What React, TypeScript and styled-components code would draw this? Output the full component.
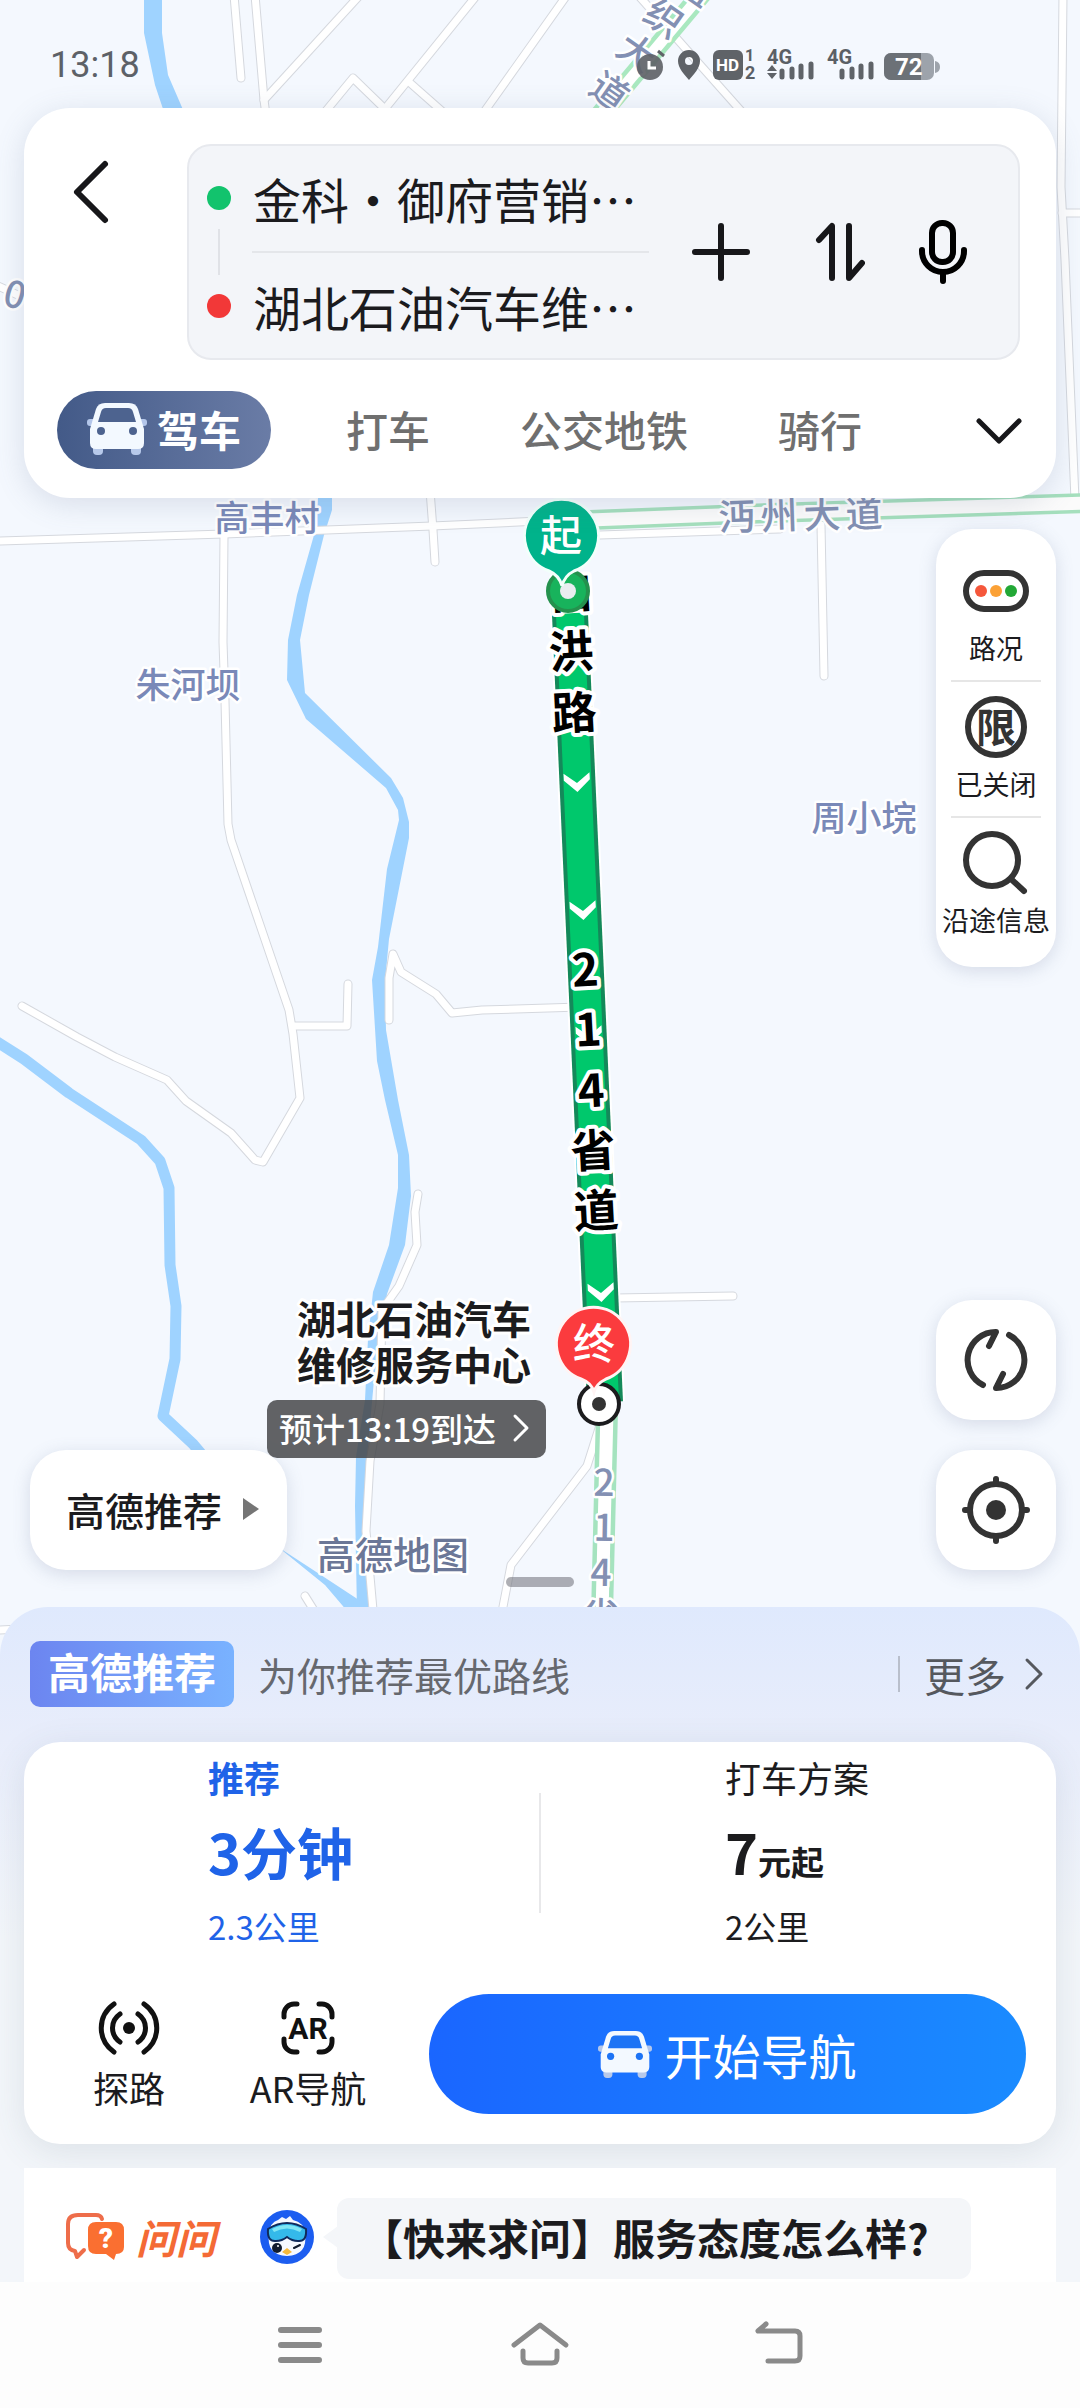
import React from 'react';
import styled, { createGlobalStyle, css } from 'styled-components';

const GlobalStyle = createGlobalStyle`
  *, *::before, *::after { box-sizing: border-box; }
  html, body, #root { min-height: 100vh; }
  body {
    margin: 0;
    background: #fdfdfd;
    color: #1b1b1e;
    font-family: "Noto Sans CJK SC", "Noto Sans", sans-serif;
  }
  #root { display: flex; flex-direction: column; }
  button, input { font: inherit; color: inherit; }
  svg { display: block; flex: none; }
`;

const plainButton = css`
  border: 0;
  margin: 0;
  padding: 0;
  background: none;
  cursor: pointer;
`;

const Screen = styled.main`
  display: flex;
  flex-direction: column;
  flex: 1;
  overflow: hidden;
`;

const MapSection = styled.section`
  position: relative;
  display: flex;
  flex-direction: column;
`;

const MapCanvas = styled.div`
  position: absolute;
  inset: 0 0 -48px;
  background: #f4f8fe;
  svg { width: 100%; height: 100%; }
`;

const StatusBar = styled.header`
  position: relative;
  display: flex;
  align-items: center;
  justify-content: space-between;
  height: 108px;
  padding: 22px 140px 0 50px;
`;

const Clock = styled.time`
  font-family: Roboto, "Noto Sans", sans-serif;
  font-size: 36px;
  line-height: 44px;
  color: #5d6167;
`;

const SearchCard = styled.section`
  position: relative;
  margin: 0 24px;
  padding: 36px 36px 29px 33px;
  border-radius: 46px;
  background: #fff;
  box-shadow: 0 6px 30px rgba(90, 105, 140, 0.18);
`;

const SearchRow = styled.div`
  display: flex;
  align-items: flex-start;
`;

const BackButton = styled.button`
  ${plainButton}
  display: grid;
  place-items: center;
  width: 68px;
  height: 96px;
  margin-right: 62px;
`;

const RouteBox = styled.div`
  flex: 1;
  display: flex;
  align-items: center;
  min-width: 0;
  padding: 0 40px 0 18px;
  border: 2px solid #e7e9ee;
  border-radius: 24px;
  background: #f3f5f9;
`;

const Stops = styled.div`
  flex: 1;
  min-width: 0;
`;

const Stop = styled.label`
  display: flex;
  align-items: center;
  gap: 22px;
  height: 105px;
  padding-bottom: 2px;
  & + div + & { padding-bottom: 0; }
`;

const Dot = styled.span<{ $color: string }>`
  flex: none;
  width: 24px;
  height: 24px;
  border-radius: 50%;
  background: ${(p) => p.$color};
`;

const StopInput = styled.input`
  flex: 1;
  min-width: 0;
  padding: 0;
  border: 0;
  outline: 0;
  background: none;
  font-size: 48px;
  line-height: 64px;
  height: 64px;
`;

const StopDivider = styled.div`
  display: flex;
  align-items: center;
  gap: 32px;
  height: 2px;
  padding-left: 11px;
  &::before {
    content: "";
    width: 2px;
    height: 46px;
    background: #e0e2e7;
  }
  &::after {
    content: "";
    flex: 1;
    height: 2px;
    background: #e4e6ea;
  }
`;

const RouteActions = styled.div`
  display: flex;
  align-items: center;
  gap: 33px;
  margin-left: 37px;
`;

const IconButton = styled.button`
  ${plainButton}
  display: grid;
  place-items: center;
  width: 70px;
  height: 80px;
  &:first-child { margin-right: 16px; }
`;

const Modes = styled.nav`
  display: flex;
  align-items: center;
  margin-top: 31px;
`;

const Mode = styled.button<{ $active?: boolean }>`
  ${plainButton}
  display: flex;
  align-items: center;
  height: 78px;
  padding: 0 45px 2px;
  font-size: 42px;
  line-height: 56px;
  font-weight: 500;
  color: #6f6f6f;
  ${(p) =>
    p.$active &&
    css`
      gap: 10px;
      margin-right: 30px;
      padding: 0 30px 2px;
      border-radius: 39px;
      background: linear-gradient(90deg, #435a88, #6a7ca6);
      color: #fff;
      font-weight: 700;
    `}
`;

const MoreModes = styled.button`
  ${plainButton}
  display: grid;
  place-items: center;
  width: 60px;
  height: 82px;
  margin: 0 -9px -4px auto;
`;

const MapBody = styled.div`
  position: relative;
  display: flex;
  flex-direction: column;
  justify-content: space-between;
  min-height: 1109px;
  padding: 31px 24px 37px 30px;
`;

const ToolPanel = styled.div`
  align-self: flex-end;
  width: 120px;
  padding: 16px 0 14px;
  border-radius: 36px;
  background: #fff;
  box-shadow: 0 4px 18px rgba(90, 105, 140, 0.2);
`;

const Tool = styled.button`
  ${plainButton}
  display: flex;
  flex-direction: column;
  align-items: center;
  gap: 9px;
  width: 120px;
  height: 136px;
  padding-top: 16px;
  font-size: 27px;
  line-height: 36px;
  white-space: nowrap;
  & + &::before {
    content: "";
    width: 90px;
    height: 2px;
    margin: -17px 0 6px;
    flex: none;
    background: #e6e6e6;
  }
`;

const MapControls = styled.div`
  display: flex;
  align-items: flex-end;
  justify-content: space-between;
`;

const RoundButtons = styled.div`
  display: flex;
  flex-direction: column;
  gap: 30px;
`;

const floating = css`
  ${plainButton}
  height: 120px;
  border-radius: 36px;
  background: #fff;
  box-shadow: 0 4px 18px rgba(90, 105, 140, 0.2);
`;

const SquareButton = styled.button`
  ${floating}
  display: grid;
  place-items: center;
  width: 120px;
`;

const PlanButton = styled.button`
  ${floating}
  display: flex;
  align-items: center;
  gap: 20px;
  padding: 0 27px 2px 36px;
  font-size: 39px;
  line-height: 52px;
  font-weight: 500;
`;

const ArrivalTag = styled.button`
  ${plainButton}
  position: absolute;
  top: 902px;
  right: calc(50% - 6px);
  display: flex;
  align-items: center;
  gap: 16px;
  height: 58px;
  padding: 0 16px 2px 12px;
  border-radius: 10px;
  background: rgba(68, 69, 72, 0.84);
  color: #fff;
  font-size: 33px;
  line-height: 44px;
  font-weight: 500;
  white-space: nowrap;
`;

const Handle = styled.span`
  position: absolute;
  bottom: 20px;
  left: 50%;
  width: 68px;
  height: 10px;
  margin-left: -34px;
  border-radius: 5px;
  background: rgba(120, 122, 130, 0.6);
`;

const Sheet = styled.section`
  position: relative;
  padding: 34px 24px 0;
  border-radius: 48px 48px 0 0;
  background: linear-gradient(#dfe9fd 0, #e8edfb 130px, #f3f6fa 330px);
`;

const SheetHeader = styled.header`
  display: flex;
  align-items: center;
  height: 66px;
  padding: 0 12px 0 6px;
`;

const Badge = styled.strong`
  padding: 2px 18px 8px;
  border-radius: 10px;
  background: linear-gradient(90deg, #6c85f0, #79b2ff);
  color: #fff;
  font-size: 42px;
  line-height: 56px;
  font-weight: 700;
`;

const SheetHint = styled.span`
  margin-left: 24px;
  font-size: 39px;
  line-height: 52px;
  color: #66686e;
`;

const MoreLink = styled.a`
  display: flex;
  align-items: center;
  gap: 18px;
  margin-left: auto;
  color: #55585e;
  font-size: 41px;
  line-height: 54px;
  text-decoration: none;
  &::before {
    content: "";
    width: 2px;
    height: 36px;
    margin-right: 6px;
    background: #b9bfcc;
  }
`;

const PlanCard = styled.section`
  margin-top: 35px;
  padding: 9px 30px 30px;
  border-radius: 36px;
  background: #fff;
  box-shadow: 0 8px 36px rgba(60, 80, 100, 0.12);
`;

const Plans = styled.div`
  display: grid;
  grid-template-columns: 1fr 2px 1fr;
  align-items: start;
  height: 213px;
`;

const PlanRule = styled.span`
  height: 120px;
  margin-top: 42px;
  background: #e8e8ea;
`;

const Plan = styled.button<{ $selected?: boolean }>`
  ${plainButton}
  display: flex;
  flex-direction: column;
  gap: 4px;
  padding-left: ${(p) => (p.$selected ? '154px' : '184px')};
  text-align: left;
  color: ${(p) => (p.$selected ? '#1f63e8' : '#1c1c1e')};
`;

const PlanTitle = styled.span<{ $bold?: boolean }>`
  font-size: 36px;
  line-height: 52px;
  font-weight: ${(p) => (p.$bold ? 700 : 400)};
`;

const PlanValue = styled.strong`
  font-size: 56px;
  line-height: 88px;
  font-weight: 700;
  small {
    font-size: 33px;
    line-height: 44px;
  }
`;

const PlanDistance = styled.span`
  font-size: 33px;
  line-height: 54px;
`;

const Actions = styled.div`
  display: flex;
  align-items: center;
  margin-top: 30px;
`;

const SideAction = styled.button`
  ${plainButton}
  display: flex;
  flex-direction: column;
  align-items: center;
  gap: 6px;
  width: 208px;
  margin-right: 17px;
  padding-top: 6px;
  font-size: 36px;
  line-height: 52px;
  &:first-child {
    width: 150px;
    margin-right: 0;
  }
`;

const StartButton = styled.button`
  ${plainButton}
  flex: 1;
  display: flex;
  align-items: center;
  justify-content: center;
  gap: 12px;
  height: 120px;
  border-radius: 60px;
  background: linear-gradient(90deg, #1a66ff, #1a8bff);
  color: #fff;
  font-size: 48px;
  line-height: 64px;
`;

const AskCard = styled.section`
  display: flex;
  align-items: flex-start;
  height: 114px;
  margin-top: 24px;
  padding: 27px 42px 0;
  background: #fff;
`;

const AskBrand = styled.strong`
  display: flex;
  align-items: center;
  gap: 10px;
  height: 84px;
  margin: 0 44px 0 0;
  color: #f46a35;
  font-size: 40px;
  line-height: 52px;
  font-style: italic;
  font-weight: 700;
`;

const AskAvatar = styled.span`
  display: flex;
  align-items: center;
  height: 84px;
`;

const Bubble = styled.a`
  position: relative;
  display: flex;
  align-items: center;
  height: 81px;
  margin: 3px 0 0 23px;
  padding: 0 42px 4px 24px;
  border-radius: 12px;
  background: #f4f6f9;
  color: #1b1b1e;
  font-size: 42px;
  line-height: 56px;
  font-weight: 700;
  text-decoration: none;
  white-space: nowrap;
  &::before {
    content: "";
    position: absolute;
    left: -14px;
    top: 28px;
    border: solid transparent;
    border-width: 11px 15px 11px 0;
    border-right-color: #f4f6f9;
  }
`;

const SystemNav = styled.nav`
  display: flex;
  align-items: center;
  justify-content: center;
  gap: 160px;
  flex: 1;
  min-height: 126px;
  background: #fdfdfd;
`;

const SystemButton = styled.button`
  ${plainButton}
  display: grid;
  place-items: center;
  width: 80px;
  height: 80px;
`;

const ROADS = [
  'M0 541 L224 534 L432 526 L540 521 L620 519',
  'M600 535 L780 529',
  'M224 536 L223 642 L225 701 L228 824 L231 840 L289 1010 L293 1034 L300 1098 L263 1162 L255 1160 L231 1133 L186 1101 L167 1080 L115 1057 L77 1037 L22 1006',
  'M293 1026 L347 1026 L348 984',
  'M389 1020 L389 978 L393 954 L401 972 L436 994 L452 1013 L482 1010 L580 1007',
  'M430 490 L433 530 L435 562',
  'M821 525 L824 676',
  'M418 1194 L415 1212 L417 1245 L399 1286 L382 1310 L380 1404 L370 1461 L366 1531 L373 1610',
  'M615 1298 L733 1296',
  'M600 1425 L587 1466 L511 1565 L502 1612',
  'M305 1596 L315 1612',
  'M0 1630 L40 1628',
  'M234 -5 L241 78',
  'M255 -5 L264 100 L266 115',
  'M360 -5 L264 100',
  'M477 -5 L384 110',
  'M567 -5 L484 112',
  'M325 112 L353 78 L388 112',
  'M409 82 L443 112',
  'M638 -5 L742 112',
  'M1063 -5 L1061 187 L1065 260 L1075 500',
  'M1062 213 L1085 213',
  'M-4 285 L20 296',
];

const RIVER =
  'M144 -2 L162 -2 L162 33 L168 75 L184 112 L332 490 L332 510 L324 535 L309 595 L300 640 L305 693 L391 778 L403 798 L409 822 L409 838 L389 939 L385 982 L386 1030 L398 1100 L409 1155 L411 1196 L405 1245 L387 1294 L374 1380 L367 1457 L364 1539 L369 1612 L357 1612 L355 1506 L356 1457 L365 1400 L368 1339 L373 1292 L389 1245 L398 1188 L398 1155 L385 1100 L377 1061 L372 980 L378 947 L387 869 L399 820 L398 810 L386 788 L306 719 L287 680 L288 640 L297 595 L314 535 L319 490 L164 112 L155 85 L144 33 Z';

type Glyph = [string, number, number, number?];

const ROUTE_GLYPHS: Glyph[] = [
  ['白', 571, 591, -3],
  ['洪', 571, 651, -3],
  ['路', 574, 712, -3],
  ['2', 585, 969, -3],
  ['1', 588, 1029, -3],
  ['4', 591, 1090, -3],
  ['省', 593, 1150, -3],
  ['道', 596, 1210, -3],
];

const ROAD_GLYPHS: Glyph[] = [
  ['组', 696, -14, 35],
  ['织', 664, 18, 35],
  ['大', 637, 52, 35],
  ['道', 610, 91, 35],
  ['沔', 737, 516, -2],
  ['州', 779, 515, -2],
  ['大', 822, 514, -2],
  ['道', 864, 513, -2],
  ['2', 604, 1482, 1],
  ['1', 604, 1527, 1],
  ['4', 601, 1572, 1],
  ['省', 601, 1615, 1],
  ['0', 15, 294, 15],
];

const PLACES: Glyph[] = [
  ['高丰村', 267, 518],
  ['朱河坝', 188, 685],
  ['周小垸', 864, 818],
];

const Label = styled.text<{ $size: number; $color: string; $halo: number; $weight?: number }>`
  font-size: ${(p) => p.$size}px;
  font-weight: ${(p) => p.$weight ?? 500};
  fill: ${(p) => p.$color};
  stroke: #fff;
  stroke-width: ${(p) => p.$halo}px;
  stroke-linejoin: round;
  paint-order: stroke;
  text-anchor: middle;
`;

/* Glyph centre sits roughly 0.37em above the baseline. */
const place = (x: number, y: number, size: number, angle = 0) =>
  `translate(${x} ${y}) rotate(${angle}) translate(0 ${Math.round(size * 0.37)})`;

const MapDrawing = () => (
  <svg viewBox="0 0 1080 1655" preserveAspectRatio="xMidYMin slice" role="img" aria-label="路线地图">
    <g fill="none" strokeLinejoin="round" strokeLinecap="round">
      <path d={RIVER} fill="#9fd3ff" />
      <path
        d="M-6 1040 L24 1059 L69 1093 L141 1140 L160 1161 L169 1188 L170 1265 L176 1306 L175 1359 L163 1416 L193 1444 L240 1500"
        stroke="#9fd3ff"
        strokeWidth="11"
      />
      <path d="M278 1547 L327 1579 L362 1602 L362 1612 L348 1612 L325 1585 Z" fill="#9fd3ff" />
      {ROADS.map((d) => (
        <path key={d} d={d} stroke="#d5d8de" strokeWidth="9" />
      ))}
      {ROADS.map((d) => (
        <path key={d} d={d} stroke="#fff" strokeWidth="7" />
      ))}
      <path d="M590 520 L770 513 L1090 503" stroke="#a5dfbd" strokeWidth="20" />
      <path d="M590 520 L770 513 L1090 503" stroke="#fbfbfb" strokeWidth="13" />
      <path d="M705 -10 L600 115" stroke="#a9e8bf" strokeWidth="20" />
      <path d="M705 -10 L600 115" stroke="#fff" strokeWidth="11" />
      <path d="M607 1410 L602 1615" stroke="#a5e3bf" strokeWidth="22" />
      <path d="M607 1410 L602 1615" stroke="#fff" strokeWidth="13" />
    </g>

    {PLACES.map(([t, x, y]) => (
      <Label key={t} $size={35} $color="#7a89b8" $halo={5} transform={place(x, y, 35)}>{t}</Label>
    ))}
    {ROAD_GLYPHS.map(([t, x, y, a]) => (
      <Label key={`${x}-${y}`} $size={37} $color="#8390b3" $halo={5} transform={place(x, y, 37, a)}>{t}</Label>
    ))}
    <Label $size={38} $color="#6b7797" $halo={5} $weight={500} transform={place(393, 1555, 38)}>高德地图</Label>

    <path d="M569 592 L605 1402" stroke="#fff" strokeWidth="40" />
    <path d="M569 592 L605 1402" stroke="#14895a" strokeWidth="36" />
    <path d="M569 592 L605 1402" stroke="#00c86c" strokeWidth="28" />
    {[[577, 783], [583, 911], [589, 1036], [601, 1293]].map(([x, y]) => (
      <path
        key={y}
        transform={`translate(${x} ${y}) rotate(-3)`}
        d="M-13 -10 L0 0 L13 -10 L13 -3 L0 9 L-13 -3 Z"
        fill="#fff"
      />
    ))}
    {ROUTE_GLYPHS.map(([t, x, y, a]) => (
      <Label key={`${x}-${y}`} $size={45} $color="#000" $halo={8} $weight={700} transform={place(x, y, 45, a)}>{t}</Label>
    ))}

    <circle cx="568" cy="591" r="20" fill="#18b35c" stroke="#24914d" strokeWidth="4" />
    <circle cx="568" cy="591" r="8" fill="#e9edf0" />
    <circle cx="599" cy="1404" r="20" fill="#fff" stroke="#1c1c1e" strokeWidth="4" />
    <circle cx="599" cy="1404" r="7" fill="#333" />

    <path
      d="M562 586 C560 578 556 574 549 571 A37 37 0 1 1 574 571 C568 574 564 578 562 586 Z"
      fill="#00b38b"
      stroke="#f2fffb"
      strokeWidth="3"
    />
    <Label $size={42} $color="#fff" $halo={0} transform={place(561, 535, 42)}>起</Label>
    <path
      d="M594 1392 C592 1385 588 1382 581 1379 A37 37 0 1 1 606 1379 C600 1382 596 1385 594 1392 Z"
      fill="#fb3b3e"
      stroke="#fff4f4"
      strokeWidth="3"
    />
    <Label $size={42} $color="#fff" $halo={0} transform={place(594, 1343, 42)}>终</Label>
    <Label $size={39} $color="#1c1c1e" $halo={6} $weight={700} transform={place(414, 1320, 39)}>湖北石油汽车</Label>
    <Label $size={39} $color="#1c1c1e" $halo={6} $weight={700} transform={place(414, 1366, 39)}>维修服务中心</Label>
  </svg>
);

const StatusText = styled.text<{ $size: number; $color?: string }>`
  font-family: Roboto, "Noto Sans", sans-serif;
  font-size: ${(p) => p.$size}px;
  font-weight: 700;
  fill: ${(p) => p.$color ?? '#5b6066'};
`;

const StatusIcons = () => (
  <svg width="304" height="32" viewBox="0 0 304 32" fill="#5f6368" role="img" aria-label="闹钟 定位 信号 电量72">
    <circle cx="14" cy="18" r="13" opacity="0.92" />
    <path d="M13 12 V19 H20" fill="none" stroke="#fff" strokeWidth="3" />
    <path d="M22 2 L28 7" stroke="#5f6368" strokeWidth="3" />
    <path fillRule="evenodd" d="M53 1 a11 11 0 0 1 11 11 c0 7 -6 13 -11 19 c-5 -6 -11 -12 -11 -19 a11 11 0 0 1 11 -11 Z M53 8 a4 4 0 1 0 0 8 a4 4 0 0 0 0 -8 Z" />
    <rect x="77" y="1" width="30" height="30" rx="6" />
    <StatusText $size={17} $color="#fff" x="80" y="22">HD</StatusText>
    <StatusText $size={16} x="109" y="12">1</StatusText>
    <StatusText $size={18} x="109" y="30">2</StatusText>
    <StatusText $size={20} x="131" y="15">4G</StatusText>
    <path d="M136 16 l5 6 h-10 Z M136 30 l5 -6 h-10 Z" />
    <path d="M146 22 V28 M156 20 V28 M165 17 V28 M175 15 V28" stroke="#5f6368" strokeWidth="5" strokeLinecap="round" />
    <StatusText $size={20} x="191" y="15">4G</StatusText>
    <path d="M206 22 V28 M216 20 V28 M225 17 V28 M235 15 V28" stroke="#5f6368" strokeWidth="5" strokeLinecap="round" />
    <rect x="248" y="4" width="50" height="27" rx="7" fill="#9da3ab" />
    <path d="M255 4 H285 V31 H255 a7 7 0 0 1 -7 -7 V11 a7 7 0 0 1 7 -7 Z" fill="#6c7177" />
    <path d="M299 12 q5 1 5 6 q0 5 -5 6 Z" fill="#9da3ab" />
    <StatusText $size={24} $color="#fff" x="259" y="26">72</StatusText>
  </svg>
);

const CarIcon = ({ width, hole }: { width: number; hole: string }) => (
  <svg width={width} height={Math.round((width * 52) / 60)} viewBox="0 0 60 52" aria-hidden="true">
    <rect x="6" y="42" width="10" height="10" rx="4" fill="#b7c9ea" />
    <rect x="44" y="42" width="10" height="10" rx="4" fill="#b7c9ea" />
    <rect x="0" y="16" width="60" height="7" rx="3" fill="#b3c6ea" />
    <path d="M18 0 H42 q7 0 9 6 L57 26 V40 q0 6 -6 6 H9 q-6 0 -6 -6 V26 L9 6 q2 -6 9 -6 Z" fill="#f3f9ff" />
    <path d="M19 5 H41 q4 0 5 4 L49 19 H11 L14 9 q1 -4 5 -4 Z" fill={hole} />
    <circle cx="14" cy="28" r="4" fill={hole} />
    <circle cx="46" cy="28" r="4" fill={hole} />
  </svg>
);

const Line = ({ w, h, d, sw = 6, color = '#17171a' }: { w: number; h: number; d: string; sw?: number; color?: string }) => (
  <svg width={w} height={h} viewBox={`0 0 ${w} ${h}`} fill="none" stroke={color} strokeWidth={sw} strokeLinecap="round" strokeLinejoin="round" aria-hidden="true">
    <path d={d} />
  </svg>
);

const MicIcon = () => (
  <svg width="50" height="66" viewBox="0 0 50 66" fill="none" stroke="#000" strokeWidth="6" strokeLinecap="round" aria-hidden="true">
    <rect x="14" y="4" width="21" height="39" rx="10" />
    <path d="M4 31 v1 a21 21 0 0 0 42 0 v-1 M25 54 V62" />
  </svg>
);

const TrafficIcon = () => (
  <svg width="68" height="60" viewBox="0 0 68 60" aria-hidden="true">
    <rect x="4" y="12" width="60" height="36" rx="18" fill="#fff" stroke="#333" strokeWidth="6" />
    <circle cx="19" cy="30" r="6" fill="#f5573b" />
    <circle cx="34" cy="30" r="6" fill="#fba136" />
    <circle cx="49" cy="30" r="6" fill="#22a836" />
  </svg>
);

const LimitIcon = () => (
  <svg width="68" height="60" viewBox="0 0 68 60" overflow="visible" aria-hidden="true">
    <circle cx="34" cy="30" r="28" fill="none" stroke="#333" strokeWidth="6" />
    <Label $size={40} $color="#333" $halo={0} $weight={700} transform={place(34, 30, 40)}>限</Label>
  </svg>
);

const SearchIcon = () => (
  <svg width="68" height="60" viewBox="0 0 68 60" overflow="visible" fill="none" stroke="#333" strokeWidth="6" strokeLinecap="round" aria-hidden="true">
    <circle cx="30" cy="27" r="26" />
    <path d="M49 46 L62 58" />
  </svg>
);

const RefreshIcon = () => (
  <svg width="66" height="66" viewBox="0 0 66 66" fill="none" stroke="#333" strokeWidth="6" strokeLinecap="round" strokeLinejoin="round" aria-hidden="true">
    <path d="M20 58 A28 28 0 0 1 33 5 L26 19" />
    <path d="M46 8 A28 28 0 0 1 33 61 L40 47" />
  </svg>
);

const LocateIcon = () => (
  <svg width="70" height="70" viewBox="0 0 70 70" fill="none" stroke="#333" strokeWidth="6" strokeLinecap="round" aria-hidden="true">
    <circle cx="35" cy="35" r="26" />
    <circle cx="35" cy="35" r="10" fill="#333" stroke="none" />
    <path d="M35 4 V9 M35 61 V66 M4 35 H9 M61 35 H66" />
  </svg>
);

const ScoutIcon = () => (
  <svg width="62" height="54" viewBox="0 0 62 54" fill="none" stroke="#111" strokeWidth="5" strokeLinecap="round" aria-hidden="true">
    <circle cx="31" cy="27" r="6" fill="#111" stroke="none" />
    <path d="M16 3 C-1 15 -1 39 16 51 M46 3 C63 15 63 39 46 51 M22 13 C12 20 12 34 22 41 M40 13 C50 20 50 34 40 41" />
  </svg>
);

const ArText = styled.text`
  font-family: Roboto, "Noto Sans", sans-serif;
  font-size: 30px;
  font-weight: 700;
  fill: #111;
  text-anchor: middle;
`;

const ArIcon = () => (
  <svg width="54" height="54" viewBox="0 0 54 54" fill="none" stroke="#111" strokeWidth="5" strokeLinecap="round" aria-hidden="true">
    <path d="M3 16 V13 a10 10 0 0 1 10 -10 H16 M38 3 h3 a10 10 0 0 1 10 10 V16 M51 38 v3 a10 10 0 0 1 -10 10 H38 M16 51 H13 a10 10 0 0 1 -10 -10 V38" />
    <ArText x="27" y="38" stroke="none">AR</ArText>
  </svg>
);

const AskMark = styled.text`
  font-family: Roboto, "Noto Sans", sans-serif;
  font-size: 28px;
  font-weight: 900;
  font-style: normal;
  fill: #fff;
  text-anchor: middle;
`;

const AskIcon = () => (
  <svg width="60" height="48" viewBox="0 0 60 48" aria-hidden="true">
    <path d="M36 6 Q35 2 30 2 H12 Q2 2 2 11 V30 Q2 37 9 38 L11 44 L18 37" fill="none" stroke="#ee6d4a" strokeWidth="4" strokeLinecap="round" strokeLinejoin="round" />
    <path d="M30 9 H50 Q58 9 58 17 V34 Q58 41 50 41 L48 47 L40 41 H30 Q22 41 22 33 V17 Q22 9 30 9 Z" fill="#fa6f31" />
    <AskMark x="40" y="35">?</AskMark>
  </svg>
);

const Mascot = () => (
  <svg width="54" height="54" viewBox="0 0 54 54" aria-hidden="true">
    <circle cx="27" cy="27" r="27" fill="#1c5df0" />
    <path d="M9 24 Q10 12 18 10 L22 7 L26 9 L30 6 L33 10 Q44 12 45 24 Q48 45 27 46 Q6 45 9 24 Z" fill="#f5f8ff" />
    <path d="M8 19 Q27 7 46 19 Q47 32 38 31 Q32 31 27 27 Q22 31 16 31 Q7 32 8 19 Z" fill="#34b9ea" stroke="#102a5c" strokeWidth="2" />
    <path d="M12 19 Q27 11 42 19 L40 22 Q27 15 14 22 Z" fill="#7fe6f5" />
    <circle cx="17" cy="38" r="5" fill="#111b2e" />
    <circle cx="18" cy="36" r="1" fill="#fff" />
    <path d="M34 38 L40 35" stroke="#111b2e" strokeWidth="2" strokeLinecap="round" />
    <path d="M22 42 L27 38 L32 42 L27 45 Z" fill="#f6b93c" />
  </svg>
);

export default function App() {
  return (
    <>
      <GlobalStyle />
      <Screen lang="zh-CN">
        <MapSection>
          <MapCanvas>
            <MapDrawing />
          </MapCanvas>
          <StatusBar>
            <Clock>13:18</Clock>
            <StatusIcons />
          </StatusBar>

          <SearchCard>
            <SearchRow>
              <BackButton aria-label="返回">
                <Line w={40} h={66} d="M34 5 L6 33 L34 61" />
              </BackButton>
              <RouteBox>
                <Stops>
                  <Stop>
                    <Dot $color="#12c36d" />
                    <StopInput aria-label="起点" defaultValue="金科·御府营销…" />
                  </Stop>
                  <StopDivider />
                  <Stop>
                    <Dot $color="#f23838" />
                    <StopInput aria-label="终点" defaultValue="湖北石油汽车维…" />
                  </Stop>
                </Stops>
                <RouteActions>
                  <IconButton aria-label="添加途经点">
                    <Line w={60} h={60} d="M30 4 V56 M4 30 H56" />
                  </IconButton>
                  <IconButton aria-label="交换起终点">
                    <Line w={50} h={60} d="M4 18 L17 4 V56 M34 4 V56 L47 41" />
                  </IconButton>
                  <IconButton aria-label="语音输入">
                    <MicIcon />
                  </IconButton>
                </RouteActions>
              </RouteBox>
            </SearchRow>
            <Modes aria-label="出行方式">
              <Mode $active>
                <CarIcon width={60} hole="#4d638f" />
                驾车
              </Mode>
              <Mode>打车</Mode>
              <Mode>公交地铁</Mode>
              <Mode>骑行</Mode>
              <MoreModes aria-label="更多出行方式">
                <Line w={48} h={30} d="M4 4 L24 24 L44 4" sw={5} />
              </MoreModes>
            </Modes>
          </SearchCard>

          <MapBody>
            <ToolPanel>
              <Tool><TrafficIcon />路况</Tool>
              <Tool><LimitIcon />已关闭</Tool>
              <Tool><SearchIcon />沿途信息</Tool>
            </ToolPanel>
            <MapControls>
              <PlanButton>
                高德推荐
                <svg width="18" height="24" viewBox="0 0 18 24" aria-hidden="true">
                  <path d="M1 1 L17 12 L1 23 Z" fill="#757575" />
                </svg>
              </PlanButton>
              <RoundButtons>
                <SquareButton aria-label="刷新"><RefreshIcon /></SquareButton>
                <SquareButton aria-label="定位"><LocateIcon /></SquareButton>
              </RoundButtons>
            </MapControls>
            <ArrivalTag>
              预计13:19到达
              <Line w={18} h={30} d="M3 3 L15 15 L3 27" sw={3} color="#fff" />
            </ArrivalTag>
            <Handle />
          </MapBody>
        </MapSection>

        <Sheet>
          <SheetHeader>
            <Badge>高德推荐</Badge>
            <SheetHint>为你推荐最优路线</SheetHint>
            <MoreLink href="#more">
              更多
              <Line w={20} h={34} d="M3 3 L17 17 L3 31" sw={3} color="#55585e" />
            </MoreLink>
          </SheetHeader>

          <PlanCard>
            <Plans>
              <Plan $selected>
                <PlanTitle $bold>推荐</PlanTitle>
                <PlanValue>3分钟</PlanValue>
                <PlanDistance>2.3公里</PlanDistance>
              </Plan>
              <PlanRule />
              <Plan>
                <PlanTitle>打车方案</PlanTitle>
                <PlanValue>7<small>元起</small></PlanValue>
                <PlanDistance>2公里</PlanDistance>
              </Plan>
            </Plans>
            <Actions>
              <SideAction><ScoutIcon />探路</SideAction>
              <SideAction><ArIcon />AR导航</SideAction>
              <StartButton>
                <CarIcon width={54} hole="#1d74f5" />
                开始导航
              </StartButton>
            </Actions>
          </PlanCard>

          <AskCard>
            <AskBrand><AskIcon />问问</AskBrand>
            <AskAvatar><Mascot /></AskAvatar>
            <Bubble href="#ask">【快来求问】服务态度怎么样?</Bubble>
          </AskCard>
        </Sheet>

        <SystemNav aria-label="系统导航">
          <SystemButton aria-label="最近任务">
            <Line w={50} h={50} d="M6 10 H44 M6 25 H44 M6 40 H44" color="#8a8a8a" />
          </SystemButton>
          <SystemButton aria-label="主屏幕">
            <Line w={60} h={50} d="M4 25 L30 5 L56 25 M13 31 V38 Q13 43 18 43 H42 Q47 43 47 38 V31" color="#8a8a8a" sw={5} />
          </SystemButton>
          <SystemButton aria-label="返回上一页">
            <Line w={54} h={50} d="M13 4 L5 11 H42 Q47 11 47 16 V36 Q47 41 42 41 H15" color="#8a8a8a" sw={5} />
          </SystemButton>
        </SystemNav>
      </Screen>
    </>
  );
}
